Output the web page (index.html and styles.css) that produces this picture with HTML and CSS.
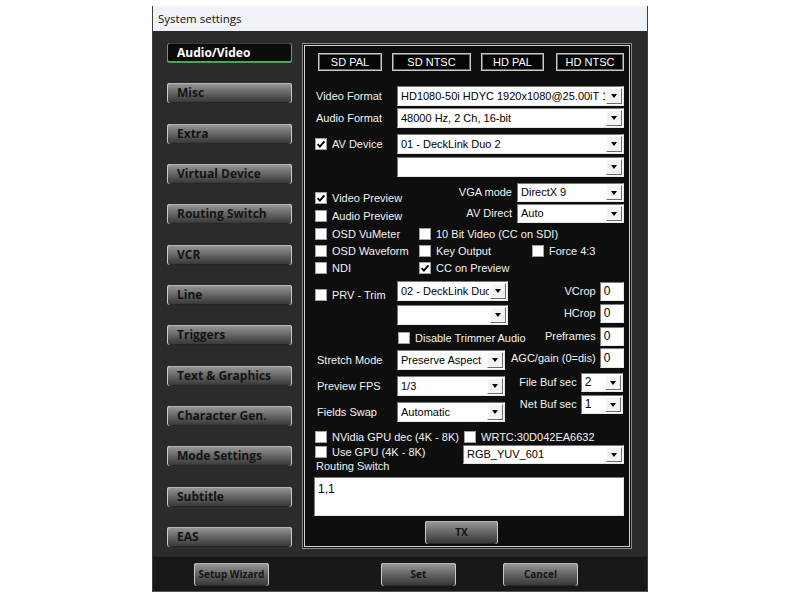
FILE: index.html
```html
<!DOCTYPE html>
<html>
<head>
<meta charset="utf-8">
<title>System settings</title>
<link rel="stylesheet" href="styles.css">
</head>
<body>
<div class="window">
  <div class="titlebar">System settings</div>
  <div class="main">
    <nav class="sidebar">
      <div class="tab active">Audio/Video</div>
      <div class="tab gbtn">Misc</div>
      <div class="tab gbtn">Extra</div>
      <div class="tab gbtn">Virtual Device</div>
      <div class="tab gbtn">Routing Switch</div>
      <div class="tab gbtn">VCR</div>
      <div class="tab gbtn">Line</div>
      <div class="tab gbtn">Triggers</div>
      <div class="tab gbtn">Text &amp; Graphics</div>
      <div class="tab gbtn">Character Gen.</div>
      <div class="tab gbtn">Mode Settings</div>
      <div class="tab gbtn">Subtitle</div>
      <div class="tab gbtn">EAS</div>
    </nav>
    <section class="panel">
      <div class="presets">
        <div class="preset p-sdpal">SD PAL</div>
        <div class="preset p-sdntsc">SD NTSC</div>
        <div class="preset p-hdpal">HD PAL</div>
        <div class="preset p-hdntsc">HD NTSC</div>
      </div>

      <div class="row r-video">
        <span class="lbl">Video Format</span>
        <div class="select s-main"><span class="val">HD1080-50i HDYC 1920x1080@25.00iT 16</span><span class="arrow"></span></div>
      </div>
      <div class="row r-audio">
        <span class="lbl">Audio Format</span>
        <div class="select s-main"><span class="val">48000 Hz, 2 Ch, 16-bit</span><span class="arrow"></span></div>
      </div>
      <div class="row r-avdev">
        <span class="cbl lblw"><span class="cb"><svg viewBox="0 0 10 10"><path d="M1.6 5.2 L3.9 7.6 L8.4 2.4" fill="none" stroke="#000" stroke-width="1.9"/></svg></span>AV Device</span>
        <div class="select s-main"><span class="val">01 - DeckLink Duo 2</span><span class="arrow"></span></div>
      </div>
      <div class="row r-empty">
        <span class="lblw"></span>
        <div class="select s-main"><span class="val"></span><span class="arrow"></span></div>
      </div>

      <div class="blockA">
        <div class="colA-left">
          <span class="cbl"><span class="cb"><svg viewBox="0 0 10 10"><path d="M1.6 5.2 L3.9 7.6 L8.4 2.4" fill="none" stroke="#000" stroke-width="1.9"/></svg></span>Video Preview</span>
          <span class="cbl"><span class="cb"></span>Audio Preview</span>
        </div>
        <div class="colA-right">
          <div class="frow"><span>VGA mode</span><div class="select s-vga"><span class="val">DirectX 9</span><span class="arrow"></span></div></div>
          <div class="frow"><span>AV Direct</span><div class="select s-vga"><span class="val">Auto</span><span class="arrow"></span></div></div>
        </div>
      </div>

      <div class="cbgrid">
        <span class="cbl"><span class="cb"></span>OSD VuMeter</span>
        <span class="cbl"><span class="cb"></span>10 Bit Video (CC on SDI)</span>
        <span></span>
        <span class="cbl"><span class="cb"></span>OSD Waveform</span>
        <span class="cbl"><span class="cb"></span>Key Output</span>
        <span class="cbl"><span class="cb"></span>Force 4:3</span>
        <span class="cbl"><span class="cb"></span>NDI</span>
        <span class="cbl"><span class="cb"><svg viewBox="0 0 10 10"><path d="M1.6 5.2 L3.9 7.6 L8.4 2.4" fill="none" stroke="#000" stroke-width="1.9"/></svg></span>CC on Preview</span>
        <span></span>
      </div>

      <div class="blockB">
        <div class="colB-left">
          <div class="row">
            <span class="cbl lblw prv"><span class="cb"></span>PRV - Trim</span>
            <div class="select s-prv"><span class="val">02 - DeckLink Duo 2</span><span class="arrow"></span></div>
          </div>
          <div class="select s-prv s-prv2"><span class="val"></span><span class="arrow"></span></div>
          <span class="cbl dta"><span class="cb"></span>Disable Trimmer Audio</span>
          <div class="row r-lower">
            <span class="lbl lbl2">Stretch Mode</span>
            <div class="select s-low"><span class="val">Preserve Aspect</span><span class="arrow"></span></div>
          </div>
          <div class="row r-lower">
            <span class="lbl lbl2">Preview FPS</span>
            <div class="select s-low"><span class="val">1/3</span><span class="arrow"></span></div>
          </div>
          <div class="row r-lower">
            <span class="lbl lbl2">Fields Swap</span>
            <div class="select s-low"><span class="val">Automatic</span><span class="arrow"></span></div>
          </div>
        </div>
        <div class="colB-right">
          <div class="rrow rr-vcrop"><span>VCrop</span><div class="inp">0</div></div>
          <div class="rrow rr-hcrop"><span>HCrop</span><div class="inp">0</div></div>
          <div class="rrow rr-pre"><span>Preframes</span><div class="inp">0</div></div>
          <div class="rrow rr-agc"><span>AGC/gain (0=dis)</span><div class="inp inp-agc">0</div></div>
          <div class="rrow rr-file"><span>File Buf sec</span><div class="select s-buf"><span class="val">2</span><span class="arrow"></span></div></div>
          <div class="rrow rr-net"><span>Net Buf sec</span><div class="select s-buf"><span class="val">1</span><span class="arrow"></span></div></div>
        </div>
      </div>

      <div class="gpurow">
        <span class="cbl"><span class="cb"></span>NVidia GPU dec (4K - 8K)</span>
        <span class="cbl"><span class="cb"></span>WRTC:30D042EA6632</span>
      </div>
      <div class="blockC">
        <div class="colC-left">
          <span class="cbl"><span class="cb"></span>Use GPU (4K - 8K)</span>
          <div class="rs-label">Routing Switch</div>
        </div>
        <div class="select s-rgb"><span class="val">RGB_YUV_601</span><span class="arrow"></span></div>
      </div>
      <div class="ta">1,1</div>
      <div class="gbtn tx">TX</div>
    </section>
  </div>
  <div class="footer">
    <div class="gbtn fbtn">Setup Wizard</div>
    <div class="gbtn fbtn f-set">Set</div>
    <div class="gbtn fbtn f-cancel">Cancel</div>
  </div>
</div>
</body>
</html>
```

FILE: styles.css
```css
* { box-sizing: border-box; }
html, body { margin: 0; padding: 0; background: #ffffff; }
body { font-family: "Liberation Sans", Arial, sans-serif; }

.window {
  width: 496px;
  height: 586px;
  margin: 6px auto 0;
  display: flex;
  flex-direction: column;
  background: #2b2b2b;
  border-left: 1px solid #3e3e3e;
  border-right: 1px solid #3e3e3e;
  border-bottom: 1px solid #555;
}

.titlebar {
  height: 25px;
  flex: none;
  background: #eff3f8;
  color: #111;
  font-family: "Open Sans", "Noto Sans", sans-serif;
  font-size: 11.5px;
  line-height: 25px;
  padding-left: 5px;
}

.main {
  height: 526px;
  flex: none;
  display: flex;
  padding: 12px 0 0 14px;
}

.sidebar {
  width: 125px;
  height: 504px;
  display: flex;
  flex-direction: column;
  justify-content: space-between;
}

.gbtn {
  background: linear-gradient(#9b9b9b 0%, #747474 35%, #505050 70%, #343434 100%);
  border-radius: 3px;
  box-shadow: inset 1px 0 0 #c9c9c9, inset -1px 0 0 #c9c9c9, inset 0 1px 0 #b4b4b4, inset 0 -1px 0 #262626;
  color: #141414;
  font-family: "Open Sans", "Noto Sans", sans-serif;
  font-weight: 700;
}

.tab {
  height: 20px;
  font-family: "Open Sans", "Noto Sans", sans-serif;
  font-weight: 700;
  font-size: 12px;
  line-height: 20px;
  padding-left: 10px;
  white-space: nowrap;
}

.tab.active {
  background: #0b0b0b;
  color: #ffffff;
  border-radius: 3px;
  box-shadow: inset 1px 0 0 #8a8a8a, inset -1px 0 0 #8a8a8a, inset 0 1px 0 #3a3a3a, inset 0 -2px 0 #3fae46;
}

.panel {
  margin-left: 10px;
  width: 330px;
  height: 506px;
  background: #0e0e0e;
  border: 1px solid #8a8a8a;
  box-shadow: inset 0 0 0 1px #0e0e0e, inset 0 0 0 2px #d2d2d2;
  padding: 9px 7px 0 12px;
  color: #f2f2f2;
  font-size: 11px;
  line-height: 13px;
  display: flex;
  flex-direction: column;
}

/* preset buttons */
.presets { display: flex; height: 18px; flex: none; }
.preset {
  height: 18px;
  background: #050505;
  border: 1px solid #c9c9c9;
  box-shadow: inset 0 0 0 1px #6a6a6a;
  color: #fff;
  display: flex;
  align-items: center;
  justify-content: center;
  font-size: 11px;
}
.p-sdpal { margin-left: 3px; width: 64px; }
.p-sdntsc { margin-left: 10px; width: 79px; }
.p-hdpal { margin-left: 10px; width: 63px; }
.p-hdntsc { margin-left: 12px; width: 68px; }

/* rows */
.row { display: flex; align-items: center; height: 20px; flex: none; }
.lbl { width: 82px; padding-left: 1px; white-space: nowrap; flex: none; }
.lbl2 { padding-left: 2px; }
.lblw { width: 82px; flex: none; }
.r-video { margin-top: 15px; }
.r-audio { margin-top: 2px; }
.r-avdev { margin-top: 6px; }
.r-empty { margin-top: 3px; }

/* checkbox */
.cbl { display: flex; align-items: center; gap: 5px; white-space: nowrap; height: 12px; }
.cb {
  width: 12px;
  height: 12px;
  flex: none;
  background: #fff;
  border: 1px solid #a0a0a0;
  display: flex;
  align-items: center;
  justify-content: center;
}
.cb svg { width: 10px; height: 10px; display: block; }

/* select */
.select {
  height: 20px;
  display: flex;
  flex: none;
  background: #fff;
  border: 1px solid;
  border-color: #7a7a7a #e6e6e6 #e6e6e6 #7a7a7a;
  color: #000;
}
.select .val {
  flex: 1;
  min-width: 0;
  overflow: hidden;
  white-space: nowrap;
  padding-left: 3px;
  line-height: 18px;
  font-size: 11px;
}
.select .arrow {
  width: 16px;
  flex: none;
  margin: 1px;
  background: #f3f3f3;
  border: 1px solid;
  border-color: #ffffff #6a6a6a #6a6a6a #ffffff;
  display: flex;
  align-items: center;
  justify-content: center;
}
.select .arrow::after {
  content: "";
  border-left: 3.5px solid transparent;
  border-right: 3.5px solid transparent;
  border-top: 4px solid #000;
}
.s-main { width: 227px; }

/* block A */
.blockA { display: flex; height: 40px; margin-top: 6px; flex: none; }
.colA-left { flex: 1; padding-top: 9px; display: flex; flex-direction: column; gap: 6px; }
.colA-right { display: flex; flex-direction: column; gap: 2px; }
.frow { display: flex; align-items: center; justify-content: flex-end; gap: 5px; }
.s-vga { width: 107px; height: 19px; }
.s-vga .val { line-height: 17px; }

/* checkbox grid */
.cbgrid {
  display: grid;
  grid-template-columns: 104px 113px 1fr;
  grid-auto-rows: 17px;
  margin-top: 5px;
  flex: none;
}

/* block B */
.blockB { display: flex; margin-top: 2px; height: 141px; flex: none; }
.colB-left { width: 196px; flex: none; display: flex; flex-direction: column; }
.prv { align-self: flex-end; }
.s-prv { width: 111px; }
.s-prv2 { margin-top: 4px; margin-left: 82px; }
.dta { margin-top: 7px; margin-left: 83px; }
.r-lower { margin-top: 6px; }
.s-low { width: 108px; }

.colB-right { flex: 1; display: flex; flex-direction: column; }
.rrow { display: flex; align-items: center; justify-content: flex-end; gap: 4px; white-space: nowrap; }
.inp {
  width: 24px;
  height: 19px;
  margin-right: 1px;
  background: #fff;
  border: 1px solid;
  border-color: #7a7a7a #e6e6e6 #e6e6e6 #7a7a7a;
  color: #000;
  padding-left: 3px;
  font-size: 12px;
  line-height: 17px;
}
.inp-agc { height: 20px; line-height: 18px; }
.rr-vcrop { margin-top: 1px; }
.rr-hcrop { margin-top: 3px; }
.rr-pre { margin-top: 4px; }
.rr-agc { margin-top: 2px; }
.rr-file { margin-top: 5px; }
.rr-net { margin-top: 3px; }
.s-buf { width: 42px; height: 19px; margin-right: 2px; }
.s-buf .val { font-size: 12px; line-height: 17px; }

/* GPU area */
.gpurow { display: grid; grid-template-columns: 149px 1fr; margin-top: 9px; height: 14px; flex: none; }
.blockC { display: flex; height: 30px; flex: none; }
.colC-left { width: 148px; flex: none; padding-top: 1px; }
.rs-label { margin-top: 2px; padding-left: 1px; line-height: 13px; }
.s-rgb { width: 161px; height: 19px; }
.s-rgb .val { line-height: 17px; }

.ta {
  margin-top: 2px;
  margin-left: -1px;
  width: 310px;
  height: 39px;
  flex: none;
  background: #fff;
  border: 1px solid;
  border-color: #7a7a7a #e6e6e6 #e6e6e6 #7a7a7a;
  color: #000;
  font-size: 12px;
  line-height: 14px;
  padding: 4px 3px;
}

.tx {
  margin-top: 5px;
  margin-left: 110px;
  width: 73px;
  height: 23px;
  flex: none;
  font-size: 10px;
  line-height: 23px;
  text-align: center;
}

/* footer */
.footer {
  height: 34px;
  flex: none;
  background: #181818;
  display: flex;
  align-items: flex-start;
  padding: 6px 0 0 41px;
}
.fbtn {
  width: 75px;
  height: 23px;
  font-size: 10px;
  line-height: 23px;
  text-align: center;
  white-space: nowrap;
}
.f-set { margin-left: 112px; }
.f-cancel { margin-left: 47px; }
```
